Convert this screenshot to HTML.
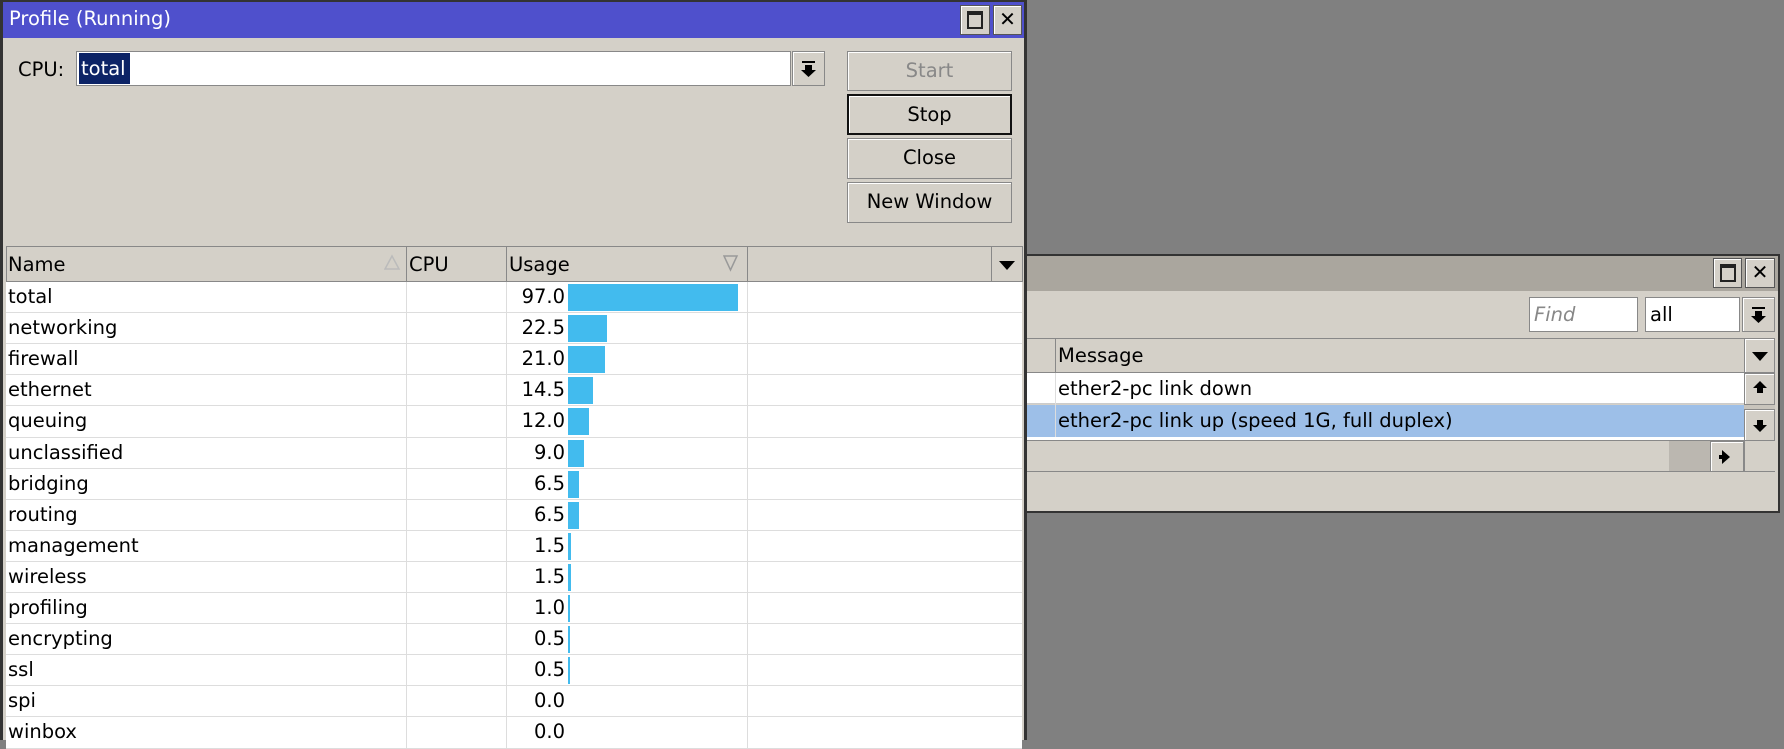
<!DOCTYPE html>
<html><head><meta charset="utf-8"><style>
*{box-sizing:border-box;margin:0;padding:0}
body{width:1784px;height:740px;background:#808080;position:relative;overflow:hidden;font-family:"DejaVu Sans","Liberation Sans",sans-serif;font-size:19.5px;color:#000}
.a{position:absolute}
.btn{position:absolute;background:#d4d0c8;border:1px solid #888;box-shadow:inset 1px 1px 0 #fff;text-align:center}
.tb{position:absolute;background:#d4d0c8;border:1px solid #555;box-shadow:inset 1px 1px 0 #fff}
.row{position:absolute;left:6px;width:1016px;background:#fff;border-bottom:1px solid #ddd}
.row span{position:absolute;top:4px;line-height:22px}
.vl{position:absolute;top:0;bottom:0;width:1px;background:#ddd}
</style></head><body>
<!-- second window -->
<div class="a" style="left:1020px;top:254px;width:760px;height:259px;background:#d4d0c8;border:2px solid #333;border-left:none"></div>
<div class="a" style="left:1020px;top:256px;width:758px;height:35px;background:#aaa69e"></div>
<div class="tb" style="left:1713px;top:258px;width:29px;height:30px"><div class="a" style="left:6px;top:5px;width:16px;height:18px;border:2px solid #222;border-top-width:4px"></div></div>
<div class="tb" style="left:1745px;top:258px;width:30px;height:30px;text-align:center;font-size:20px;line-height:27px;font-weight:bold">✕</div>
<div class="a" style="left:1529px;top:297px;width:109px;height:35px;background:#fff;border:1px solid #888;color:#888;font-style:italic;padding:5px 4px">Find</div>
<div class="a" style="left:1645px;top:297px;width:95px;height:35px;background:#fff;border:1px solid #888;padding:5px 4px">all</div>
<div class="btn" style="left:1742px;top:297px;width:33px;height:35px"><svg width="31" height="33"><rect x="9" y="9" width="13" height="2"/><path d="M12 13h7v5h4l-7.5 7-7.5-7h4z"/></svg></div>
<div class="a" style="left:1026px;top:338px;width:749px;height:35px;background:#d4d0c8;border:1px solid #888;border-left:none"></div>
<div class="a" style="left:1055px;top:338px;width:1px;height:35px;background:#888"></div>
<div class="a" style="left:1058px;top:344px">Message</div>
<div class="btn" style="left:1744px;top:338px;width:31px;height:35px"><svg width="30" height="33"><path d="M7 13h16l-8 9z"/></svg></div>
<div class="a" style="left:1026px;top:373px;width:718px;height:31px;background:#fff;border-bottom:1px solid #ccc"></div>
<div class="a" style="left:1026px;top:405px;width:718px;height:32px;background:#9dbfe8"></div>
<div class="a" style="left:1055px;top:373px;width:1px;height:64px;background:#ddd"></div>
<div class="a" style="left:1058px;top:377px">ether2-pc link down</div>
<div class="a" style="left:1058px;top:409px">ether2-pc link up (speed 1G, full duplex)</div>
<div class="a" style="left:1026px;top:437px;width:718px;height:4px;background:#fff;border-bottom:1px solid #888"></div>
<div class="btn" style="left:1744px;top:373px;width:31px;height:32px"><svg width="30" height="30"><path d="M15 7l-7 7h4v5h6v-5h4z"/></svg></div>
<div class="a" style="left:1744px;top:405px;width:31px;height:5px;background:#c8c4bc"></div>
<div class="btn" style="left:1744px;top:409px;width:31px;height:32px"><svg width="30" height="30"><path d="M15 22l-7-7h4v-5h6v5h4z"/></svg></div>
<div class="a" style="left:1026px;top:441px;width:749px;height:31px;background:#d4d0c8;border-bottom:1px solid #888"></div>
<div class="a" style="left:1669px;top:441px;width:41px;height:30px;background:#bbb7b0"></div>
<div class="btn" style="left:1710px;top:441px;width:34px;height:31px"><svg width="32" height="29"><path d="M11 8l8 7-8 7z M11 13h-3v4h3z"/></svg></div>
<div class="a" style="left:1744px;top:441px;width:1px;height:31px;background:#888"></div>

<!-- profile window -->
<div class="a" style="left:0;top:0;width:1027px;height:740px;background:#d4d0c8;border:3px solid #333;border-bottom:none;border-top-width:2px"></div>
<div class="a" style="left:3px;top:2px;width:1021px;height:36px;background:#4f50cc"></div>
<div class="a" style="left:9px;top:7px;color:#fff">Profile (Running)</div>
<div class="tb" style="left:960px;top:5px;width:30px;height:30px"><div class="a" style="left:6px;top:5px;width:16px;height:18px;border:2px solid #222;border-top-width:4px"></div></div>
<div class="tb" style="left:993px;top:5px;width:29px;height:30px;text-align:center;font-size:20px;line-height:27px;font-weight:bold">✕</div>
<div class="a" style="left:18px;top:58px">CPU:</div>
<div class="a" style="left:76px;top:51px;width:715px;height:35px;background:#fff;border:1px solid #888"></div>
<div class="a" style="left:79px;top:53px;width:51px;height:31px;background:#0c2366;color:#fff;padding:4px 2px">total</div>
<div class="btn" style="left:792px;top:51px;width:33px;height:35px"><svg width="31" height="33"><rect x="9" y="9" width="13" height="2"/><path d="M12 13h7v5h4l-7.5 7-7.5-7h4z"/></svg></div>
<div class="btn" style="left:847px;top:51px;width:165px;height:40px;line-height:37px;color:#888">Start</div>
<div class="btn" style="left:847px;top:94px;width:165px;height:41px;line-height:38px;border:2px solid #111">Stop</div>
<div class="btn" style="left:847px;top:138px;width:165px;height:41px;line-height:38px">Close</div>
<div class="btn" style="left:847px;top:182px;width:165px;height:41px;line-height:38px">New Window</div>
<!-- table header -->
<div class="a" style="left:6px;top:246px;width:1017px;height:36px;background:#d4d0c8;border:1px solid #888"></div>
<div class="a" style="left:406px;top:246px;width:1px;height:36px;background:#888"></div>
<div class="a" style="left:506px;top:246px;width:1px;height:36px;background:#888"></div>
<div class="a" style="left:747px;top:246px;width:1px;height:36px;background:#888"></div>
<div class="a" style="left:991px;top:246px;width:1px;height:36px;background:#888"></div>
<div class="a" style="left:8px;top:253px">Name</div>
<div class="a" style="left:409px;top:253px">CPU</div>
<div class="a" style="left:509px;top:253px">Usage</div>
<svg class="a" style="left:384px;top:254px" width="18" height="18"><path d="M1 15h14L8 2z" fill="none" stroke="#bbb" stroke-width="1.5"/></svg>
<svg class="a" style="left:723px;top:254px" width="16" height="18"><path d="M1 2h13L7.5 16z" fill="none" stroke="#999" stroke-width="1.5"/></svg>
<svg class="a" style="left:993px;top:252px" width="28" height="24"><path d="M6 9h16l-8 9z"/></svg>
<div id="rows"></div>
<script>
var d=[["total",97.0],["networking",22.5],["firewall",21.0],["ethernet",14.5],["queuing",12.0],["unclassified",9.0],["bridging",6.5],["routing",6.5],["management",1.5],["wireless",1.5],["profiling",1.0],["encrypting",0.5],["ssl",0.5],["spi",0.0],["winbox",0.0]];
var h="";
d.forEach(function(r,i){var t=Math.round(282+i*31.1);var t2=Math.round(282+(i+1)*31.1);var w=r[1]>0?Math.max(2,r[1]*1.75):0;
h+='<div class="row" style="top:'+t+'px;height:'+(t2-t)+'px"><div class="vl" style="left:400px"></div><div class="vl" style="left:500px"></div><div class="vl" style="left:741px"></div><span style="left:2px">'+r[0]+'</span><span style="right:457px">'+r[1].toFixed(1)+'</span>'+(w?'<div class="a" style="left:562px;top:2px;width:'+w+'px;height:27px;background:#42bbee"></div>':'')+'</div>';});
document.getElementById("rows").innerHTML=h;
</script>
</body></html>
